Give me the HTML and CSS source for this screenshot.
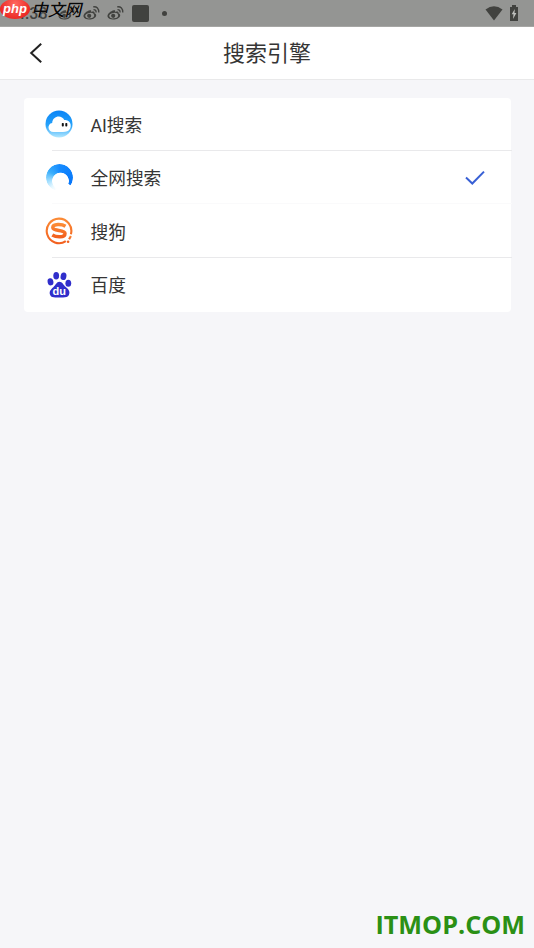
FILE: index.html
```html
<!DOCTYPE html>
<html lang="zh-CN">
<head>
<meta charset="utf-8">
<title>搜索引擎</title>
<link rel="stylesheet" href="styles.css">
</head>
<body>
<svg width="0" height="0" class="defs">
  <defs>
    <linearGradient id="sky" x1="0" y1="0" x2="0" y2="1"><stop offset="0" stop-color="#0b84f6"/><stop offset=".55" stop-color="#25a2fa"/><stop offset="1" stop-color="#b4e8ff"/></linearGradient>
    <linearGradient id="orange" x1="0" y1="0" x2="0" y2="1"><stop offset="0" stop-color="#fb8a35"/><stop offset="1" stop-color="#f2601f"/></linearGradient>
    <g id="weibo">
      <path d="M7 5.200C3.600 5.800.2 9 .5 11.400C.9 14 5 15 8.600 14.200C12 13.400 14 11 12.900 9.200C12.500 8.400 11.500 8.300 11.500 8.300C12 6.500 10.500 6.200 8 7.100C8.600 5.500 8 5 7 5.200Z" fill="#41423f"/>
      <ellipse cx="6.700" cy="10.600" rx="4.500" ry="2.700" transform="rotate(-9 6.700 10.600)" fill="#939491"/>
      <circle cx="6.200" cy="10.800" r="2.100" fill="#41423f"/>
      <path d="M10.500 4.600Q13.200 4.500 13.100 7.400M10.200 1.800Q15.900 1.300 15.800 7.600" fill="none" stroke="#41423f" stroke-width="1.300"/>
    </g>
  </defs>
</svg>
<header class="status">
  <span class="clock">4:38</span>
  <svg class="weibo" viewBox="0 0 17 16"><use href="#weibo"/></svg>
  <svg class="weibo" viewBox="0 0 17 16"><use href="#weibo"/></svg>
  <svg class="weibo" viewBox="0 0 17 16"><use href="#weibo"/></svg>
  <i class="square"></i><i class="dot"></i>
  <svg class="wifi" viewBox="0 0 18 15"><path d="M.5 3.500Q9-3 17.500 3.500L9 14.500Z"/></svg>
  <svg class="battery" viewBox="0 0 10 17"><path d="M3 0h4v2h2v14H1V2h2Z"/><path class="bolt" d="M5.800 4L2.700 9.300H4.500L4 14L7.400 8H5.500Z"/></svg>
  <div class="brand"><span class="php">php</span><span class="site">中文网</span></div>
</header>
<nav class="top">
  <svg class="back" viewBox="0 0 14 22"><path d="M12.200 1.700L2.200 11L12.200 20.300"/></svg>
  <h1>搜索引擎</h1>
</nav>
<main class="card">
  <div class="row">
    <svg class="icon" viewBox="0 0 28 28"><circle cx="14" cy="14" r="13.500" fill="url(#sky)"/><path d="M9 22C2.300 22.300 1.800 13.800 7.200 13C7.500 5.500 16.800 4.200 19.300 10C26.500 9 28 18.800 22.300 21.200Q20 22.200 17 22Z" fill="#fff"/><rect x="16.800" y="13.100" width="2" height="3.400" rx=".7" fill="#141414"/><rect x="20.300" y="13.100" width="2" height="3.400" rx=".7" fill="#141414"/></svg>
    <span class="name">AI搜索</span>
  </div>
  <div class="row">
    <i class="ring"></i>
    <span class="name">全网搜索</span>
    <svg class="check" viewBox="0 0 20 16"><path d="M1 7.600L7.300 13.500L19 1.600"/></svg>
  </div>
  <div class="row">
    <svg class="icon" viewBox="0 0 28 28" fill="none" stroke="url(#orange)"><path d="M20.800 24.200A12.300 12.300 0 1 1 25.900 17.200" stroke-width="2.100"/><path d="M20.500 9.200C17 7 7.800 6.500 7.800 10.600C7.800 14.800 20 12.200 20 16.500C20 21 11 20.300 7.300 18" stroke-width="3.500"/><path d="M25.900 19L24.100 22.200" stroke-width="2.100"/><circle cx="23.100" cy="24.800" r="1.300" fill="#f2601f" stroke="none"/></svg>
    <span class="name">搜狗</span>
  </div>
  <div class="row">
    <svg class="icon" viewBox="0 0 28 28" fill="#302ecb"><ellipse cx="5.500" cy="10.800" rx="2.900" ry="3.600" transform="rotate(-12 5.500 10.800)"/><ellipse cx="11.200" cy="4.800" rx="2.900" ry="3.800"/><ellipse cx="18.500" cy="5.300" rx="2.900" ry="3.800" transform="rotate(12 18.500 5.300)"/><ellipse cx="23.300" cy="12.300" rx="2.900" ry="3.500"/><path d="M14.300 10.800C17.300 10.800 18.300 14 20.800 16.100C23.800 18.500 25.300 20.900 23.900 24C22.700 27 18.700 26.400 14.700 26.400C10.200 26.400 6.800 27.200 5.300 24.300C3.600 20.800 5.700 18.500 8.300 16.200C10.700 14 11.600 10.800 14.300 10.800Z"/><text x="14.300" y="24.400" text-anchor="middle" class="du">du</text></svg>
    <span class="name">百度</span>
  </div>
</main>
<footer>ITMOP.COM</footer>
</body>
</html>
```
FILE: styles.css
```css
* { box-sizing: border-box; }
body { margin: 0; height: 948px; background: #f6f6f9; font-family: Roboto, "Noto Sans CJK SC", sans-serif; color: #353535; display: flex; flex-direction: column; overflow: hidden; }
.defs { position: absolute; }
.status { position: relative; height: 27px; flex: none; background: #949593; border-bottom: 1px solid #a6a6a4; display: flex; align-items: center; padding: 0 15px 0 16px; color: #41423f; }
.clock { width: 42px; font-size: 16px; font-weight: 500; line-height: 26px; padding-top: 2px; }
.weibo { width: 17px; height: 16px; margin-right: 7.500px; }
.square { width: 17px; height: 17px; border-radius: 2px; background: #41423f; }
.dot { width: 5px; height: 5px; border-radius: 50%; background: #41423f; margin-left: 13px; }
.wifi { width: 18px; height: 15px; fill: #41423f; margin-left: auto; }
.battery { width: 10px; height: 17px; fill: #41423f; margin-left: 6px; }
.battery .bolt { fill: #bfc0bd; }
.brand { position: absolute; left: 0; top: -1px; display: flex; align-items: center; height: 20px; }
.php { width: 30px; height: 20px; border-radius: 50%; background: radial-gradient(ellipse at 50% 25%, #ff6860, #ea2622 75%); color: #fff; font: italic 700 13px/20px "Liberation Sans", sans-serif; text-align: center; }
.site { margin-left: 1px; padding-top: 2px; font-size: 16.800px; line-height: 20px; font-weight: 500; font-style: italic; color: #080808; white-space: nowrap; text-shadow: 0 0 1px #bbb; }
.top { height: 53px; flex: none; background: #fff; border-bottom: 1px solid #e9e9ea; display: grid; grid-template-columns: 60px 1fr 60px; align-items: center; }
.back { width: 14px; height: 22px; margin-left: 29px; fill: none; stroke: #222; stroke-width: 2; }
h1 { margin: 0; padding-top: 2px; text-align: center; font-size: 22px; line-height: 30px; font-weight: 400; }
.card { margin: 18px 23px 0 24px; height: 214px; flex: none; background: #fff; border-radius: 4px; display: grid; grid-template-rows: repeat(4, 53.500px); }
.row { position: relative; display: flex; align-items: center; padding: 0 26px 0 21px; }
.row::after { content: ""; position: absolute; left: 28px; right: -1px; bottom: 1px; height: 1px; background: #e9e9eb; }
.row:nth-child(2)::after { background: #fafafb; }
.row:last-child::after { display: none; }
.icon { width: 28px; height: 28px; flex: none; }
.row:first-child .icon, .row:nth-child(3) .icon { margin-top: -1px; }
.row:last-child .icon { margin-left: -.5px; margin-right: .5px; }
.ring { width: 27px; height: 27px; flex: none; margin: -1px 0 0 1px; border-radius: 50%; background: conic-gradient(from 0deg at 50% 50%, #168bff, #0878fa 110deg, #0878fa 124deg, transparent 127deg, transparent 195deg, #e8f8ff 218deg, #9bdcff 255deg, #3aaefb 300deg, #168bff 360deg); -webkit-mask: radial-gradient(circle at 14.500px 17px, transparent 8px, #000 8.700px); mask: radial-gradient(circle at 14.500px 17px, transparent 8px, #000 8.700px); }
.name { margin-left: 17.500px; font-size: 17.700px; line-height: 26px; padding-top: 1px; }
.row:first-child .name, .row:nth-child(3) .name { padding-top: 2px; }
.check { margin-left: auto; width: 20px; height: 16px; fill: none; stroke: #3860d5; stroke-width: 2; }
.du { font: 700 11px "Liberation Sans", sans-serif; fill: #fff; }
footer { margin: auto 9px 9px auto; color: #2b9015; font: 700 25.200px/30px "Open Sans", sans-serif; }
```
